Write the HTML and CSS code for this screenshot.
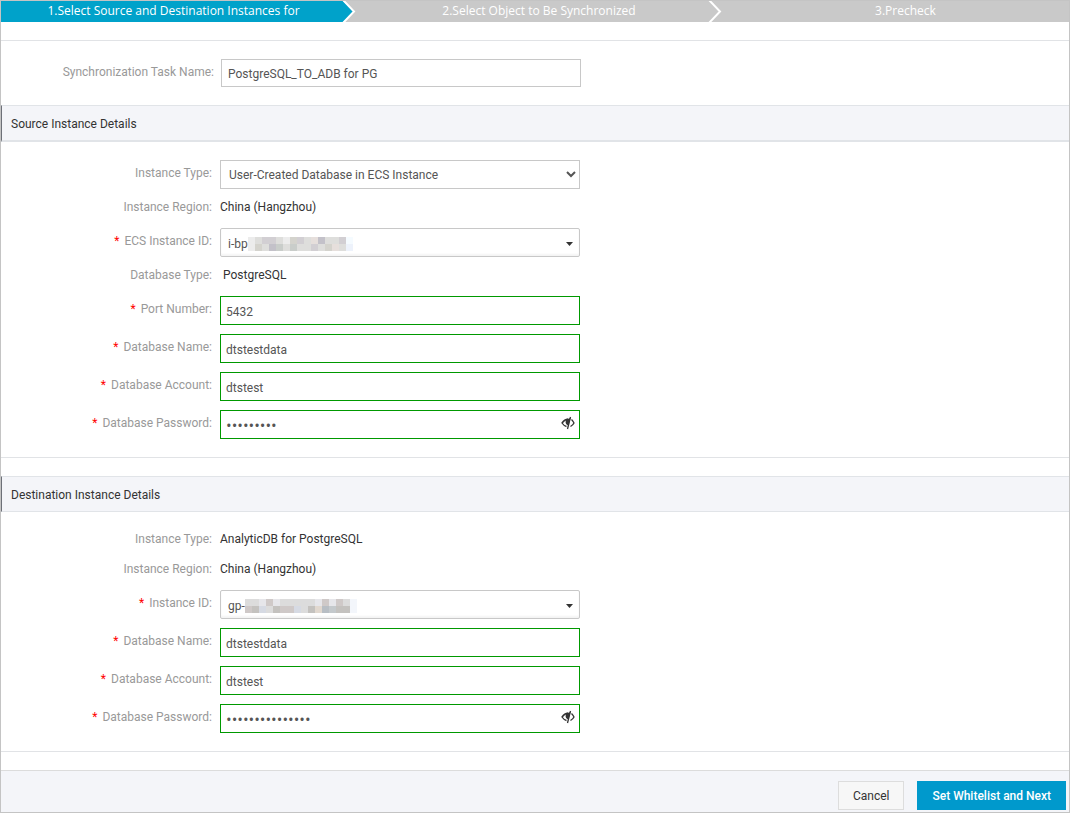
FILE: index.html
```html
<!DOCTYPE html>
<html lang="en">
<head>
<meta charset="utf-8">
<title>Create Synchronization Task</title>
<link rel="stylesheet" href="styles.css">
</head>
<body>
<form class="page">
  <ol class="steps">
    <li class="step step-first step-active">1.Select Source and Destination Instances for
      <svg class="step-arrow" viewBox="0 0 14 21" aria-hidden="true"><path class="arrow-next" d="M0 0H14V21H0Z"/><path class="arrow-fill" d="M0 0H1L11 10.500L1 21H0Z"/><path class="arrow-line" d="M1 -1L12 10.500L1 22"/></svg>
    </li>
    <li class="step">2.Select Object to Be Synchronized
      <svg class="step-arrow" viewBox="0 0 14 21" aria-hidden="true"><path class="arrow-line" d="M1 -1L12 10.500L1 22"/></svg>
    </li>
    <li class="step step-last">3.Precheck</li>
  </ol>

  <div class="task">
    <label class="label" for="task-name">Synchronization Task Name:</label>
    <input class="field" id="task-name" type="text" value="PostgreSQL_TO_ADB for PG">
  </div>

  <h2 class="heading heading-source">Source Instance Details</h2>
  <section class="rows">
    <div class="row">
      <label class="label" for="src-type">Instance Type:</label>
      <select class="field select" id="src-type"><option>User-Created Database in ECS Instance</option></select>
    </div>
    <div class="row text-row"><span class="label">Instance Region:</span><span>China (Hangzhou)</span></div>
    <div class="row">
      <label class="label required" for="src-id">ECS Instance ID:</label>
      <button class="field picker" id="src-id" type="button"><span>i-bp</span><svg class="mosaic" width="105" height="14" viewBox="0 0 15 2" shape-rendering="crispEdges" aria-hidden="true"><path fill="#dededc" d="M0 0h15v2H0z"/><path fill="#ececec" d="M0 0h1v2H0zM5 0h1v1H5z"/><path fill="#d2cfd3" d="M2 0h2v1H2zM7 0h1v1H7zM9 1h1v1H9zM13 0h1v1h-1z"/><path fill="#c3c1c9" d="M3 1h1v1H3zM10 0h1v1h-1z"/><path fill="#c9cdca" d="M4 1h1v1H4zM6 1h1v1H6z"/><path fill="#d4d3cd" d="M1 1h1v1H1zM6 0h1v1H6zM11 1h1v1h-1z"/><path fill="#e6dfdc" d="M12 1h1v1h-1zM9 0h1v1H9z"/><path fill="#f5fbff" d="M14 0h1v1h-1z"/><path fill="#edf2fb" d="M14 1h1v1h-1z"/></svg><svg class="caret" width="7" height="4" viewBox="0 0 7 4" aria-hidden="true"><path d="M0 0H7L3.500 4Z"/></svg></button>
    </div>
    <div class="row text-row"><span class="label">Database Type:</span><span class="db-type">PostgreSQL</span></div>
    <div class="row">
      <label class="label required" for="src-port">Port Number:</label>
      <input class="field valid" id="src-port" type="text" value="5432">
    </div>
    <div class="row">
      <label class="label required" for="src-db">Database Name:</label>
      <input class="field valid" id="src-db" type="text" value="dtstestdata">
    </div>
    <div class="row">
      <label class="label required" for="src-account">Database Account:</label>
      <input class="field valid" id="src-account" type="text" value="dtstest">
    </div>
    <div class="row">
      <label class="label required" for="src-password">Database Password:</label>
      <div class="password">
        <input class="field valid secret" id="src-password" type="password" value="Example12">
        <button class="eye" type="button" aria-label="Show password"><svg width="14" height="14" viewBox="0 0 14 14" aria-hidden="true"><path class="eye-line" d="M7 3Q3.500 3.500 1 7Q3 10 5.500 10.500M10.500 3.500Q12 5 13 7Q12 9 9.500 10.500M9.500 1L6.500 13"/><path class="eye-fill" d="M5 3.500L9.500 2L7.500 9.500Q3.500 8.500 5 3.500Z"/></svg></button>
      </div>
    </div>
  </section>

  <h2 class="heading">Destination Instance Details</h2>
  <section class="rows">
    <div class="row text-row"><span class="label">Instance Type:</span><span>AnalyticDB for PostgreSQL</span></div>
    <div class="row text-row"><span class="label">Instance Region:</span><span>China (Hangzhou)</span></div>
    <div class="row">
      <label class="label required" for="dst-id">Instance ID:</label>
      <button class="field picker" id="dst-id" type="button"><span>gp-</span><svg class="mosaic" width="112" height="14" viewBox="0 0 16 2" shape-rendering="crispEdges" aria-hidden="true"><path fill="#dcdcdc" d="M0 0h16v2H0z"/><path fill="#e6e6ea" d="M2 0h1v1H2zM4 0h1v1H4zM10 0h1v1h-1zM12 0h1v1h-1z"/><path fill="#d6dae3" d="M2 1h1v1H2zM7 1h1v1H7z"/><path fill="#c4c2bf" d="M1 1h1v1H1zM4 1h1v1H4zM9 1h1v1H9zM13 1h2v1h-2z"/><path fill="#cfc9c8" d="M0 1h1v1H0zM3 0h1v1H3zM5 1h2v1H5zM11 0h1v1h-1zM13 0h1v1h-1z"/><path fill="#b8bec4" d="M11 1h1v1h-1z"/><path fill="#c4c9cc" d="M12 1h1v1h-1z"/><path fill="#e1d8cf" d="M10 1h1v1h-1z"/><path fill="#f3f6fb" d="M15 0h1v2h-1z"/></svg><svg class="caret" width="7" height="4" viewBox="0 0 7 4" aria-hidden="true"><path d="M0 0H7L3.500 4Z"/></svg></button>
    </div>
    <div class="row">
      <label class="label required" for="dst-db">Database Name:</label>
      <input class="field valid" id="dst-db" type="text" value="dtstestdata">
    </div>
    <div class="row">
      <label class="label required" for="dst-account">Database Account:</label>
      <input class="field valid" id="dst-account" type="text" value="dtstest">
    </div>
    <div class="row">
      <label class="label required" for="dst-password">Database Password:</label>
      <div class="password">
        <input class="field valid secret" id="dst-password" type="password" value="ExampleValue123">
        <button class="eye" type="button" aria-label="Show password"><svg width="14" height="14" viewBox="0 0 14 14" aria-hidden="true"><path class="eye-line" d="M7 3Q3.500 3.500 1 7Q3 10 5.500 10.500M10.500 3.500Q12 5 13 7Q12 9 9.500 10.500M9.500 1L6.500 13"/><path class="eye-fill" d="M5 3.500L9.500 2L7.500 9.500Q3.500 8.500 5 3.500Z"/></svg></button>
      </div>
    </div>
  </section>

  <footer class="footer">
    <button class="btn" type="button">Cancel</button>
    <button class="btn btn-primary" type="button">Set Whitelist and Next</button>
  </footer>
</form>
</body>
</html>
```
FILE: styles.css
```css
* { box-sizing: border-box; }

body {
  margin: 0;
  font: 12px/19px Roboto, "Open Sans", sans-serif;
  color: #333;
  background: #fff;
}

input, select, button { font: inherit; color: inherit; }

.page {
  display: flex;
  flex-direction: column;
  min-height: 100vh;
  border: 1px solid #c4c4c4;
}

.steps {
  display: grid;
  grid-template-columns: 355fr 366fr 347fr;
  margin: 0 0 18px;
  padding: 0;
  list-style: none;
}

.step {
  position: relative;
  padding-bottom: 2px;
  font-family: "Open Sans", sans-serif;
  font-weight: 500;
  text-align: center;
  color: #fff;
  background: #c9c9c9;
}

.step-first { padding-right: 10px; }
.step-last { padding-left: 20px; }
.step-active { background: #00a2ca; }

.step-arrow {
  position: absolute;
  top: 0;
  right: 0;
  width: 14px;
  height: 21px;
}

.arrow-next { fill: #c9c9c9; }
.arrow-fill { fill: #00a2ca; }
.arrow-line { fill: none; stroke: #fff; stroke-width: 2; }

.task {
  display: flex;
  gap: 7px;
  padding: 18px 0;
  border-top: 1px solid #e1e3e6;
}

.task .label { flex-basis: 213px; }
.task .field { height: 28px; }

.heading {
  margin: 0;
  padding: 2px 9px 0;
  font-size: 12px;
  font-weight: 400;
  line-height: 32px;
  background: #f4f5f9;
  border: solid #e1e4e8;
  border-width: 1px 0;
  border-left: 1px solid #6d7078;
}

.heading-source { border-bottom-width: 2px; }

.rows {
  display: flex;
  flex-direction: column;
  gap: 9px;
  padding: 18px 0;
  margin-bottom: 18px;
  border-bottom: 1px solid #e1e3e6;
}

.row { display: flex; gap: 8px; }
.text-row { padding-bottom: 2px; }
.db-type { padding-left: 3px; }

.label {
  flex: 0 0 211px;
  line-height: 27px;
  text-align: right;
  color: #999;
}

.text-row .label { line-height: 19px; }
.required::before { content: "*"; margin-right: 5px; color: #f00; }

.field {
  width: 360px;
  height: 29px;
  padding: 1px 6px 0;
  color: #555;
  background: #fff;
  border: 1px solid #c8c8c8;
  border-radius: 0;
  outline: 0;
}

.select { padding: 0 4px; }
.valid { padding: 2px 5px 0; border-color: #090; }
.secret { padding-top: 0; font-family: "Open Sans", sans-serif; font-size: 15px; }

.picker {
  display: flex;
  align-items: center;
  padding: 3px 6px 0 7px;
  border-radius: 2px;
  box-shadow: inset 0 -2px 2px #f4f4f4;
}

.caret { margin-left: auto; fill: #333; }

.password { position: relative; }

.eye {
  position: absolute;
  top: 6px;
  right: 5px;
  display: flex;
  padding: 0;
  border: 0;
  background: none;
}

.eye-line { fill: none; stroke: #333; stroke-width: 1.3; }
.eye-fill { fill: #333; }

.footer {
  display: flex;
  flex: 1;
  align-items: flex-start;
  justify-content: flex-end;
  gap: 13px;
  padding: 10px 3px 2px;
  background: #f4f5f9;
  border-top: 1px solid #dcdcdc;
}

.btn {
  height: 29px;
  padding: 2px 14px 0;
  background: #f7f7f7;
  border: 1px solid #ddd;
}

.btn-primary {
  font-weight: 500;
  color: #fff;
  background: #09c;
  border-color: #09c;
}
```
